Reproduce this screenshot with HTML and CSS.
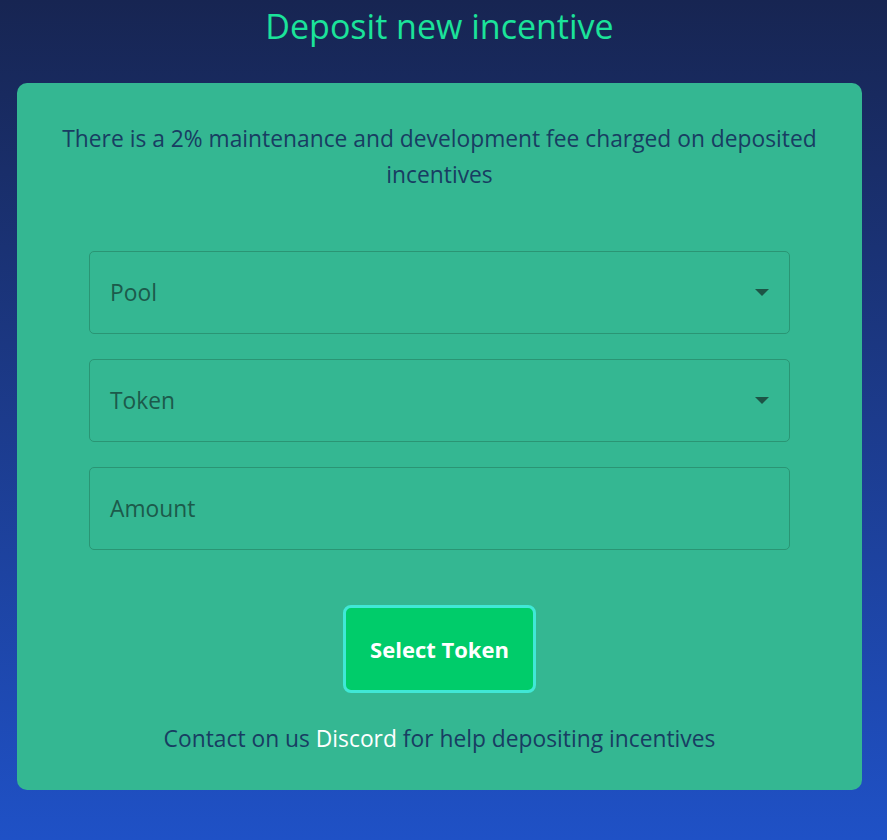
FILE: index.html
```html
<!DOCTYPE html>
<html>
<head>
<meta charset="utf-8">
<link rel="stylesheet" href="styles.css">
</head>
<body>
<div class="page">
  <h1 class="title">Deposit new incentive</h1>
  <div class="card">
    <p class="fee">There is a 2% maintenance and development fee charged on deposited incentives</p>
    <div class="form">
      <div class="field">
        <span class="label">Pool</span>
        <span class="arrow"></span>
      </div>
      <div class="field">
        <span class="label">Token</span>
        <span class="arrow"></span>
      </div>
      <div class="field">
        <span class="label">Amount</span>
      </div>
    </div>
    <button class="btn">Select Token</button>
    <p class="contact">Contact on us <a class="link">Discord</a> for help depositing incentives</p>
  </div>
</div>
</body>
</html>
```

FILE: styles.css
```css
html, body {
  margin: 0;
  padding: 0;
}
body {
  width: 887px;
  height: 840px;
  background: linear-gradient(180deg, #172552 0%, #1c3b8c 50%, #1f51c6 100%);
  font-family: "Open Sans", "Noto Sans", sans-serif;
  overflow: hidden;
}
.page {
  width: 879px;
  display: flex;
  flex-direction: column;
  align-items: center;
}
.title {
  margin: 4px 0 0 0;
  height: 79px;
  font-weight: 400;
  font-size: 34px;
  line-height: 44px;
  color: #1be39a;
}
.card {
  box-sizing: border-box;
  width: 845px;
  height: 707px;
  background: #34b792;
  border-radius: 10px;
  display: flex;
  flex-direction: column;
  align-items: center;
  padding-top: 38px;
}
.fee {
  margin: 0;
  width: 800px;
  text-align: center;
  font-size: 22.8px;
  line-height: 36px;
  color: #183d62;
}
.form {
  margin-top: 58px;
  width: 701px;
  display: flex;
  flex-direction: column;
  gap: 25px;
}
.field {
  box-sizing: border-box;
  height: 83px;
  border: 1px solid #2a9574;
  border-radius: 5px;
  display: flex;
  align-items: center;
  justify-content: space-between;
  padding: 0 20px 0 20px;
}
.label {
  font-size: 22.8px;
  color: #1c5a4b;
}
.arrow {
  width: 0;
  height: 0;
  border-left: 7px solid transparent;
  border-right: 7px solid transparent;
  border-top: 7px solid #1d5446;
}
.btn {
  margin-top: 55px;
  box-sizing: border-box;
  width: 193px;
  height: 88px;
  background: #00cc6a;
  border: 3px solid #40e8d6;
  border-radius: 8px;
  color: #ffffff;
  font-family: "Open Sans", "Noto Sans", sans-serif;
  font-weight: 700;
  font-size: 22px;
  padding: 0;
}
.contact {
  margin: 28px 0 0 0;
  font-size: 22.8px;
  line-height: 36px;
  color: #183d62;
}
.link {
  color: #ffffff;
}
```
